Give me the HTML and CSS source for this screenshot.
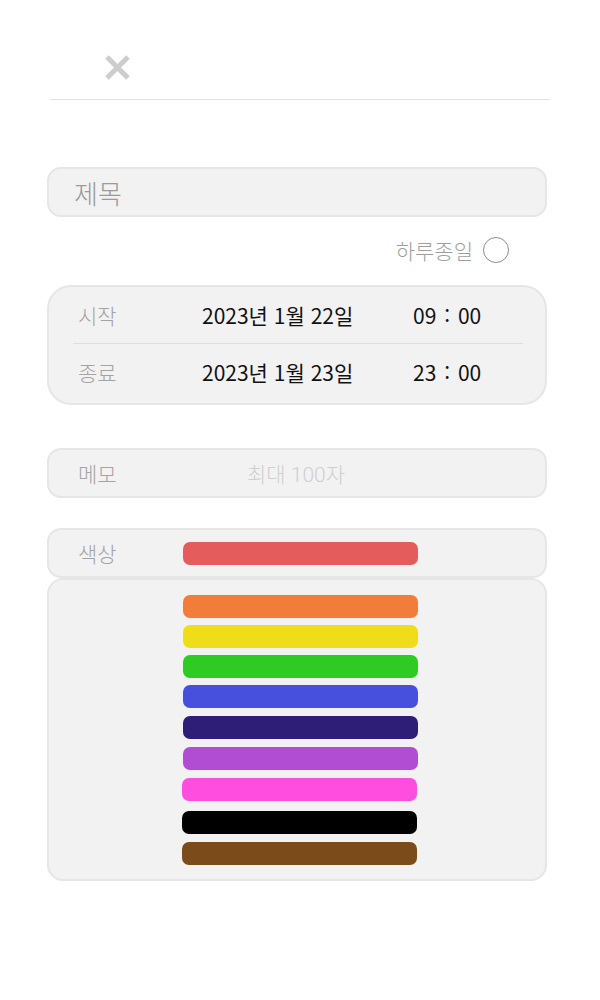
FILE: index.html
```html
<!DOCTYPE html>
<html lang="ko">
<head>
<meta charset="utf-8">
<link rel="stylesheet" href="styles.css">
</head>
<body>
<div class="page">
  <header class="header">
    <button class="close" aria-label="닫기">
      <svg width="27" height="27" viewBox="0 0 27 27"><path d="M3 3 L24 24 M24 3 L3 24" stroke="#cdcdcd" stroke-width="5" fill="none"/></svg>
    </button>
  </header>

  <main class="form">
    <div class="field title-field">제목</div>

    <label class="allday">
      <span>하루종일</span>
      <span class="radio"></span>
    </label>

    <div class="field datetime">
      <div class="dt-row">
        <span class="label">시작</span>
        <span class="date">2023년 1월 22일</span>
        <span class="time">09 : 00</span>
      </div>
      <div class="dt-divider"></div>
      <div class="dt-row">
        <span class="label">종료</span>
        <span class="date">2023년 1월 23일</span>
        <span class="time">23 : 00</span>
      </div>
    </div>

    <div class="field memo">
      <span class="label">메모</span>
      <span class="placeholder">최대 100자</span>
    </div>

    <div class="field color">
      <span class="label">색상</span>
      <span class="swatch red"></span>
    </div>
    <div class="field palette">
      <span class="swatch orange"></span>
      <span class="swatch yellow"></span>
      <span class="swatch green"></span>
      <span class="swatch blue"></span>
      <span class="swatch navy nudge"></span>
      <span class="swatch purple nudge"></span>
      <span class="swatch pink nudge shift"></span>
      <span class="swatch black wide shift"></span>
      <span class="swatch brown nudge shift"></span>
    </div>
  </main>
</div>
</body>
</html>
```

FILE: styles.css
```css
* { box-sizing: border-box; }
html, body { margin: 0; padding: 0; background: #fff; }
body {
  font-family: Roboto, "Noto Sans CJK KR", sans-serif;
  font-weight: 300;
  color: #111;
}
.page { width: 600px; }

.header {
  margin-left: 50px;
  width: 500px;
  padding: 54px 0 18px 54px;
  border-bottom: 1px solid #e2e2e2;
  height: 100px;
}
.close {
  display: block;
  border: 0;
  padding: 0;
  background: none;
  width: 27px;
  height: 27px;
}
.close svg { display: block; }

.form {
  margin-left: 47px;
  width: 500px;
  padding-top: 67px;
  display: flex;
  flex-direction: column;
}

.field {
  background: #f2f2f2;
  border: 2px solid #e6e6e6;
  border-radius: 14px;
}

.title-field {
  height: 50px;
  padding-left: 25px;
  display: flex;
  align-items: center;
  font-size: 26px;
  color: #9a9a9a;
}

.allday {
  margin-top: 20px;
  height: 26px;
  display: flex;
  justify-content: flex-end;
  align-items: center;
  gap: 10px;
  padding-right: 38px;
  font-size: 21px;
  color: #9e9e9e;
}
.radio {
  width: 26px;
  height: 26px;
  border: 1px solid #8f8f8f;
  border-radius: 50%;
  background: #fff;
}

.datetime {
  margin-top: 22px;
  height: 120px;
  border-radius: 24px;
}
.dt-row {
  height: 56px;
  display: grid;
  grid-template-columns: 124px 211px 1fr;
  align-items: center;
  padding-left: 29px;
}
.dt-divider {
  height: 1px;
  background: #dedede;
  margin: 0 22px 0 24px;
}
.label {
  font-size: 21px;
  color: #a3a3a3;
}
.date, .time {
  font-family: "Noto Sans CJK KR", sans-serif;
  font-size: 21px;
  font-weight: 400;
  color: #111;
}
.time { word-spacing: 2px; }

.memo {
  margin-top: 43px;
  height: 50px;
  display: grid;
  grid-template-columns: 169px 1fr;
  align-items: center;
  padding-left: 29px;
}
.placeholder {
  font-size: 21px;
  color: #cfcfcf;
}

.color {
  margin-top: 30px;
  height: 50px;
  display: grid;
  grid-template-columns: 105px 1fr;
  align-items: center;
  padding-left: 29px;
}

.palette {
  height: 303px;
  border-radius: 16px;
  padding: 15px 0 0 134px;
  display: flex;
  flex-direction: column;
  gap: 6px;
}
.palette .swatch + .swatch { margin-top: 1px; }
.palette .swatch.nudge { margin-top: 2px; }
.palette .swatch.wide { margin-top: 4px; }
.palette .swatch.shift { margin-left: -1px; }

.swatch {
  display: block;
  width: 235px;
  height: 23px;
  border-radius: 7px;
}
.red { background: #e45c5c; }
.orange { background: #f27d3a; }
.yellow { background: #f0dd1a; }
.green { background: #2ecb23; }
.blue { background: #4650dd; }
.navy { background: #2f1e78; }
.purple { background: #b04dd3; }
.pink { background: #ff4de0; }
.black { background: #000; }
.brown { background: #7b4c19; }
```
